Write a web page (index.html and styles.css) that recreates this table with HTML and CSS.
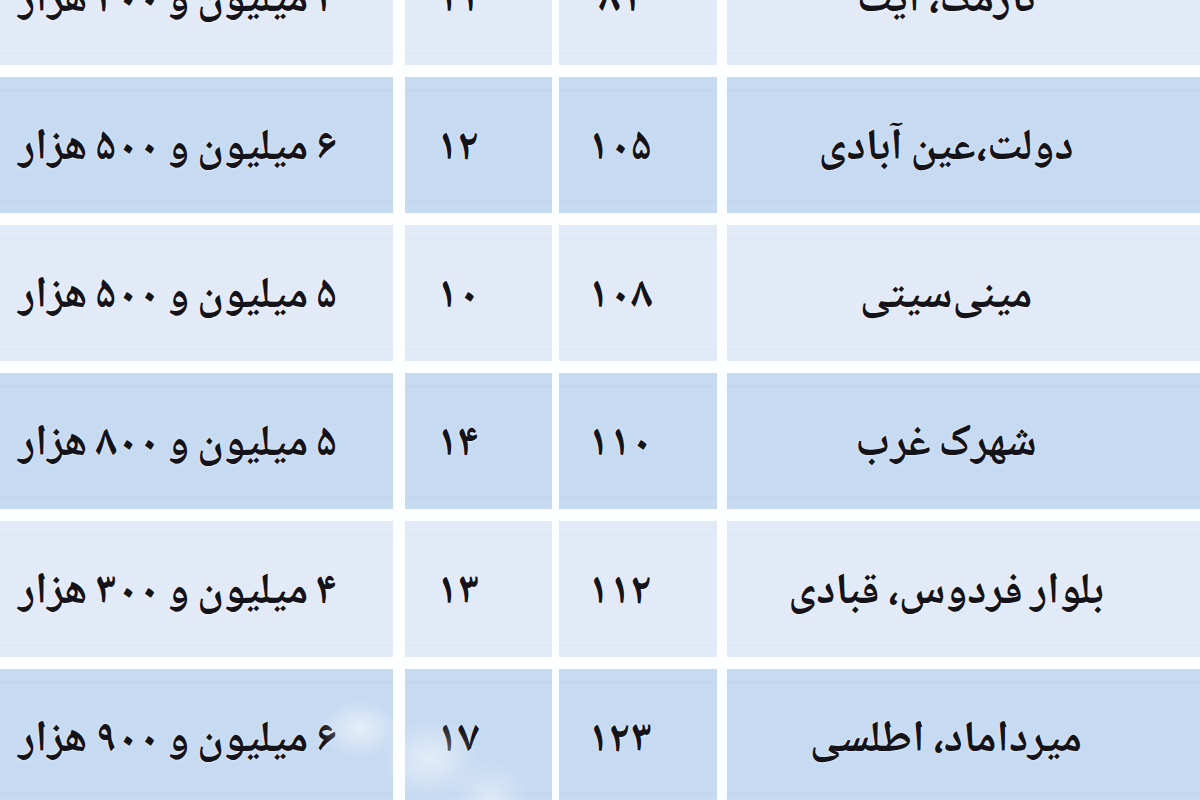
FILE: index.html
```html
<!DOCTYPE html>
<html lang="fa">
<head>
<meta charset="utf-8">
<title>جدول قیمت</title>
<link rel="stylesheet" href="styles.css">
</head>
<body>
<div class="table">
  <div class="row light">
    <div class="cell c-price">۴ میلیون و ۲۰۰ هزار</div>
    <div class="cell c-age">۱۱</div>
    <div class="cell c-area">۸۱</div>
    <div class="cell c-area-name">نارمک، آیت</div>
  </div>
  <div class="row dark">
    <div class="cell c-price">۶ میلیون و ۵۰۰ هزار</div>
    <div class="cell c-age">۱۲</div>
    <div class="cell c-area">۱۰۵</div>
    <div class="cell c-area-name">دولت،عین آبادی</div>
  </div>
  <div class="row light">
    <div class="cell c-price">۵ میلیون و ۵۰۰ هزار</div>
    <div class="cell c-age">۱۰</div>
    <div class="cell c-area">۱۰۸</div>
    <div class="cell c-area-name">مینی‌سیتی</div>
  </div>
  <div class="row dark">
    <div class="cell c-price">۵ میلیون و ۸۰۰ هزار</div>
    <div class="cell c-age">۱۴</div>
    <div class="cell c-area">۱۱۰</div>
    <div class="cell c-area-name">شهرک غرب</div>
  </div>
  <div class="row light">
    <div class="cell c-price">۴ میلیون و ۳۰۰ هزار</div>
    <div class="cell c-age">۱۳</div>
    <div class="cell c-area">۱۱۲</div>
    <div class="cell c-area-name">بلوار فردوس، قبادی</div>
  </div>
  <div class="row dark">
    <div class="cell c-price">۶ میلیون و ۹۰۰ هزار</div>
    <div class="cell c-age">۱۷</div>
    <div class="cell c-area">۱۲۳</div>
    <div class="cell c-area-name">میرداماد، اطلسی</div>
  </div>
  <div class="haze"></div>
</div>
</body>
</html>
```

FILE: styles.css
```css
html, body {
  margin: 0;
  padding: 0;
  background: #fdfeff;
  overflow: hidden;
}
body {
  width: 1200px;
  height: 800px;
  font-family: "Noto Naskh Arabic", "DejaVu Sans", sans-serif;
  font-weight: bold;
  color: #15131a;
}
.table {
  position: relative;
  margin-top: -71px;
  display: flex;
  flex-direction: column;
  gap: 12px;
}
.row {
  display: flex;
  height: 136px;
}
.cell {
  display: flex;
  align-items: center;
  justify-content: center;
  box-sizing: border-box;
  direction: rtl;
  font-size: 44px;
  line-height: 1;
  padding-top: 10px;
  word-spacing: -2px;
  text-shadow: 0 0 3px rgba(255,255,255,0.7);
  white-space: nowrap;
}
.light .cell {
  background-color: #e2eaf7;
  background-image:
    linear-gradient(#dce4f3, #dce4f3),
    linear-gradient(#dce4f3, #dce4f3);
  background-repeat: no-repeat;
  background-size: 100% 1px, 100% 1px;
  background-position: 0 13px, 0 calc(100% - 11px);
}
.dark .cell {
  background-color: #c6daf2;
  background-image:
    linear-gradient(#bfd3ee, #bfd3ee),
    linear-gradient(#bfd3ee, #bfd3ee);
  background-repeat: no-repeat;
  background-size: 100% 1px, 100% 1px;
  background-position: 0 13px, 0 calc(100% - 11px);
}
.c-price {
  width: 393px;
  padding-right: 37px;
}
.c-age {
  width: 147px;
  margin-left: 12px;
  padding-right: 41px;
}
.c-area {
  width: 158px;
  margin-left: 7px;
  padding-right: 36px;
}
.c-area-name {
  width: 473px;
  margin-left: 10px;
  padding-right: 35px;
}
.haze {
  position: absolute;
  left: 320px;
  top: 760px;
  width: 220px;
  height: 120px;
  background:
    radial-gradient(ellipse 40px 30px at 40px 40px, rgba(255,255,255,0.55), rgba(255,255,255,0) 100%),
    radial-gradient(ellipse 50px 40px at 110px 70px, rgba(255,255,255,0.5), rgba(255,255,255,0) 100%),
    radial-gradient(ellipse 40px 40px at 170px 110px, rgba(255,255,255,0.4), rgba(255,255,255,0) 100%);
  pointer-events: none;
}
```
